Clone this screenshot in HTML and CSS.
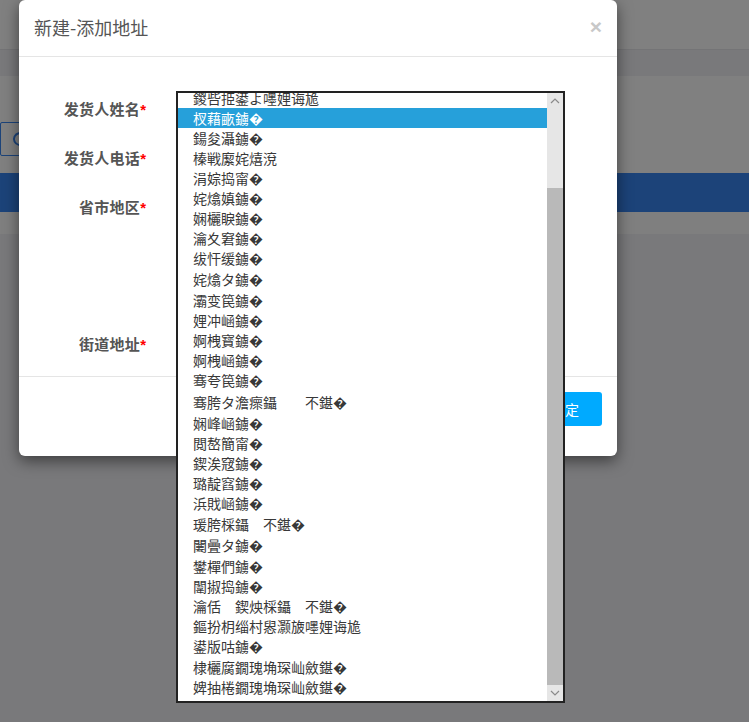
FILE: index.html
```html
<!DOCTYPE html>
<html lang="zh-CN">
<head>
<meta charset="utf-8">
<title>新建-添加地址</title>
<link rel="stylesheet" href="styles.css">
</head>
<body>
<div class="page">
  <div class="bar-top"></div>
  <div class="bar-sub"></div>
  <div class="toolbar">
    <button class="refresh" type="button">
      <svg width="18" height="18" viewBox="0 0 18 18"><path d="M15 9a6 6 0 1 1-2.2-4.6" fill="none" stroke="#1c4379" stroke-width="2"/><path d="M10.5 2.5h4v4z" fill="#1c4379"/></svg>
    </button>
  </div>
  <div class="nav"></div>
  <div class="strip"></div>
  <div class="rest"></div>
</div>

<div class="modal">
  <div class="modal-header">
    <h4 class="modal-title">新建-添加地址</h4>
    <span class="close">×</span>
  </div>
  <div class="modal-body">
    <label class="form-label">发货人姓名<i>*</i></label>
    <div class="field"><input class="form-input" type="text"></div>
    <label class="form-label">发货人电话<i>*</i></label>
    <div class="field"><input class="form-input" type="text"></div>
    <label class="form-label">省市地区<i>*</i></label>
    <div class="field tall"><div class="form-input"></div></div>
    <label class="form-label">街道地址<i>*</i></label>
    <div class="field"><input class="form-input" type="text"></div>
  </div>
  <div class="modal-footer">
    <button class="btn-ok" type="button">确定</button>
  </div>
</div>

<div class="dropdown">
  <ul class="options">
    <li>鍐呰挋鍙よ嚜娌诲尯</li>
    <li class="selected">杈藉畞鐪�</li>
    <li>鍚夋灄鐪�</li>
    <li>榛戦緳姹熺渷</li>
    <li>涓婃捣甯�</li>
    <li>姹熻嫃鐪�</li>
    <li>娴欐睙鐪�</li>
    <li>瀹夊窘鐪�</li>
    <li>绂忓缓鐪�</li>
    <li class="h22">姹熻タ鐪�</li>
    <li>灞变笢鐪�</li>
    <li>娌冲崡鐪�</li>
    <li>婀栧寳鐪�</li>
    <li>婀栧崡鐪�</li>
    <li>骞夸笢鐪�</li>
    <li class="h23">骞胯タ澹瘝鑷　　不鍖�</li>
    <li>娴峰崡鐪�</li>
    <li>閲嶅簡甯�</li>
    <li>鍥涘窛鐪�</li>
    <li>璐靛窞鐪�</li>
    <li>浜戝崡鐪�</li>
    <li class="h21">瑗胯棌鑷　不鍖�</li>
    <li class="h22">闄曡タ鐪�</li>
    <li>鐢樿們鐪�</li>
    <li>闈掓捣鐪�</li>
    <li>瀹佸　鍥炴棌鑷　不鍖�</li>
    <li>鏂扮枂缁村惥灏旇嚜娌诲尯</li>
    <li>鍙版咕鐪�</li>
    <li class="h21">棣欐腐鐗瑰埆琛屾斂鍖�</li>
    <li>婢抽棬鐗瑰埆琛屾斂鍖�</li>
  </ul>
  <div class="scrollbar">
    <div class="sb-arrow">
      <svg width="10" height="6" viewBox="0 0 10 6"><path d="M1 5l4-4 4 4" fill="none" stroke="#8a8a8a" stroke-width="1.2"/></svg>
    </div>
    <div class="sb-space"></div>
    <div class="sb-thumb"></div>
    <div class="sb-arrow">
      <svg width="10" height="6" viewBox="0 0 10 6"><path d="M1 1l4 4 4-4" fill="none" stroke="#8a8a8a" stroke-width="1.2"/></svg>
    </div>
  </div>
</div>
</body>
</html>
```

FILE: styles.css
```css
* { box-sizing: border-box; }
html, body {
  margin: 0;
  padding: 0;
  height: 100%;
  overflow: hidden;
  background: #79797b;
  font-family: "Noto Sans CJK SC", "Noto Sans", "DejaVu Sans", sans-serif;
}

/* dimmed page behind the dialog */
.page { display: flex; flex-direction: column; height: 100%; }
.bar-top { height: 50px; background: #808080; border-bottom: 1px solid #747476; flex: none; }
.bar-sub { height: 26px; background: #79797b; flex: none; }
.toolbar { height: 97px; background: #808080; flex: none; padding-top: 46px; }
.refresh {
  width: 40px; height: 34px; margin: 0; padding: 0;
  background: #808080; border: 1px solid #1c4379; border-radius: 2px;
  display: flex; align-items: center; justify-content: center;
}
.nav { height: 39px; background: #1c4379; flex: none; }
.strip { height: 22px; background: #7f7f7f; flex: none; }
.rest { flex: 1; background: #79797b; }

/* dialog */
.modal {
  position: absolute;
  left: 19px; top: 0;
  width: 598px; height: 456px;
  background: #fff;
  border-radius: 6px;
  box-shadow: 0 5px 15px rgba(0,0,0,.5);
  display: flex; flex-direction: column;
}
.modal-header {
  height: 57px; flex: none;
  border-bottom: 1px solid #e5e5e5;
  padding: 0 15px;
  display: flex; align-items: center; justify-content: space-between;
}
.modal-title { margin: 0; font-size: 18px; font-weight: normal; color: #555; line-height: 1; padding-bottom: 2px; }
.close { font-family: "Liberation Sans", Arial, sans-serif; font-size: 21px; font-weight: bold; color: #c8c8c8; line-height: 1; padding-bottom: 3px; }

.modal-body {
  height: 319px; flex: none;
  padding: 35px 57px 15px 0;
  display: grid;
  grid-template-columns: 127px 1fr;
  column-gap: 30px;
  row-gap: 15px;
  align-content: start;
}
.form-label {
  text-align: right;
  font-size: 15px; font-weight: bold; color: #555;
  line-height: 34px; height: 34px;
  white-space: nowrap;
  letter-spacing: 0.3px;
}
.form-label i { font-style: normal; color: #f00; font-family: "Liberation Sans", Arial, sans-serif; letter-spacing: 0; }
.field { height: 34px; }
.field.tall { height: 122px; }
.form-input { width: 100%; height: 34px; border: 1px solid #ccc; border-radius: 3px; display: block; }

.modal-footer {
  flex: none;
  border-top: 1px solid #e5e5e5;
  padding: 15px 15px 30px;
  display: flex; justify-content: flex-end;
}
.btn-ok {
  width: 74px; height: 34px;
  background: #00aaff; color: #fff;
  border: none; border-radius: 3px;
  font-family: inherit; font-size: 14px;
}

/* open native-looking select list */
.dropdown {
  position: absolute;
  left: 176px; top: 91px;
  width: 389px; height: 612px;
  border: 2px solid #222;
  background: #fff;
  display: flex;
}
.options {
  flex: 1;
  list-style: none;
  margin: 0; padding: 0;
  overflow: hidden;
}
.options li {
  height: 20px;
  padding-left: 15px;
  display: flex; align-items: center;
  font-size: 14px; line-height: 1; color: #383838;
  white-space: nowrap;
}
.options li:first-child { margin-top: -5px; }
.options li.h21 { height: 21px; }
.options li.h22 { height: 22px; }
.options li.h23 { height: 23px; }
.options li.selected { background: #26a0da; color: #fff; }

.scrollbar { width: 16px; flex: none; display: flex; flex-direction: column; background: #e6e6e6; }
.sb-arrow { height: 16px; flex: none; display: flex; align-items: center; justify-content: center; }
.sb-space { height: 79px; flex: none; }
.sb-thumb { flex: 1; background: #b9b9b9; }
```
